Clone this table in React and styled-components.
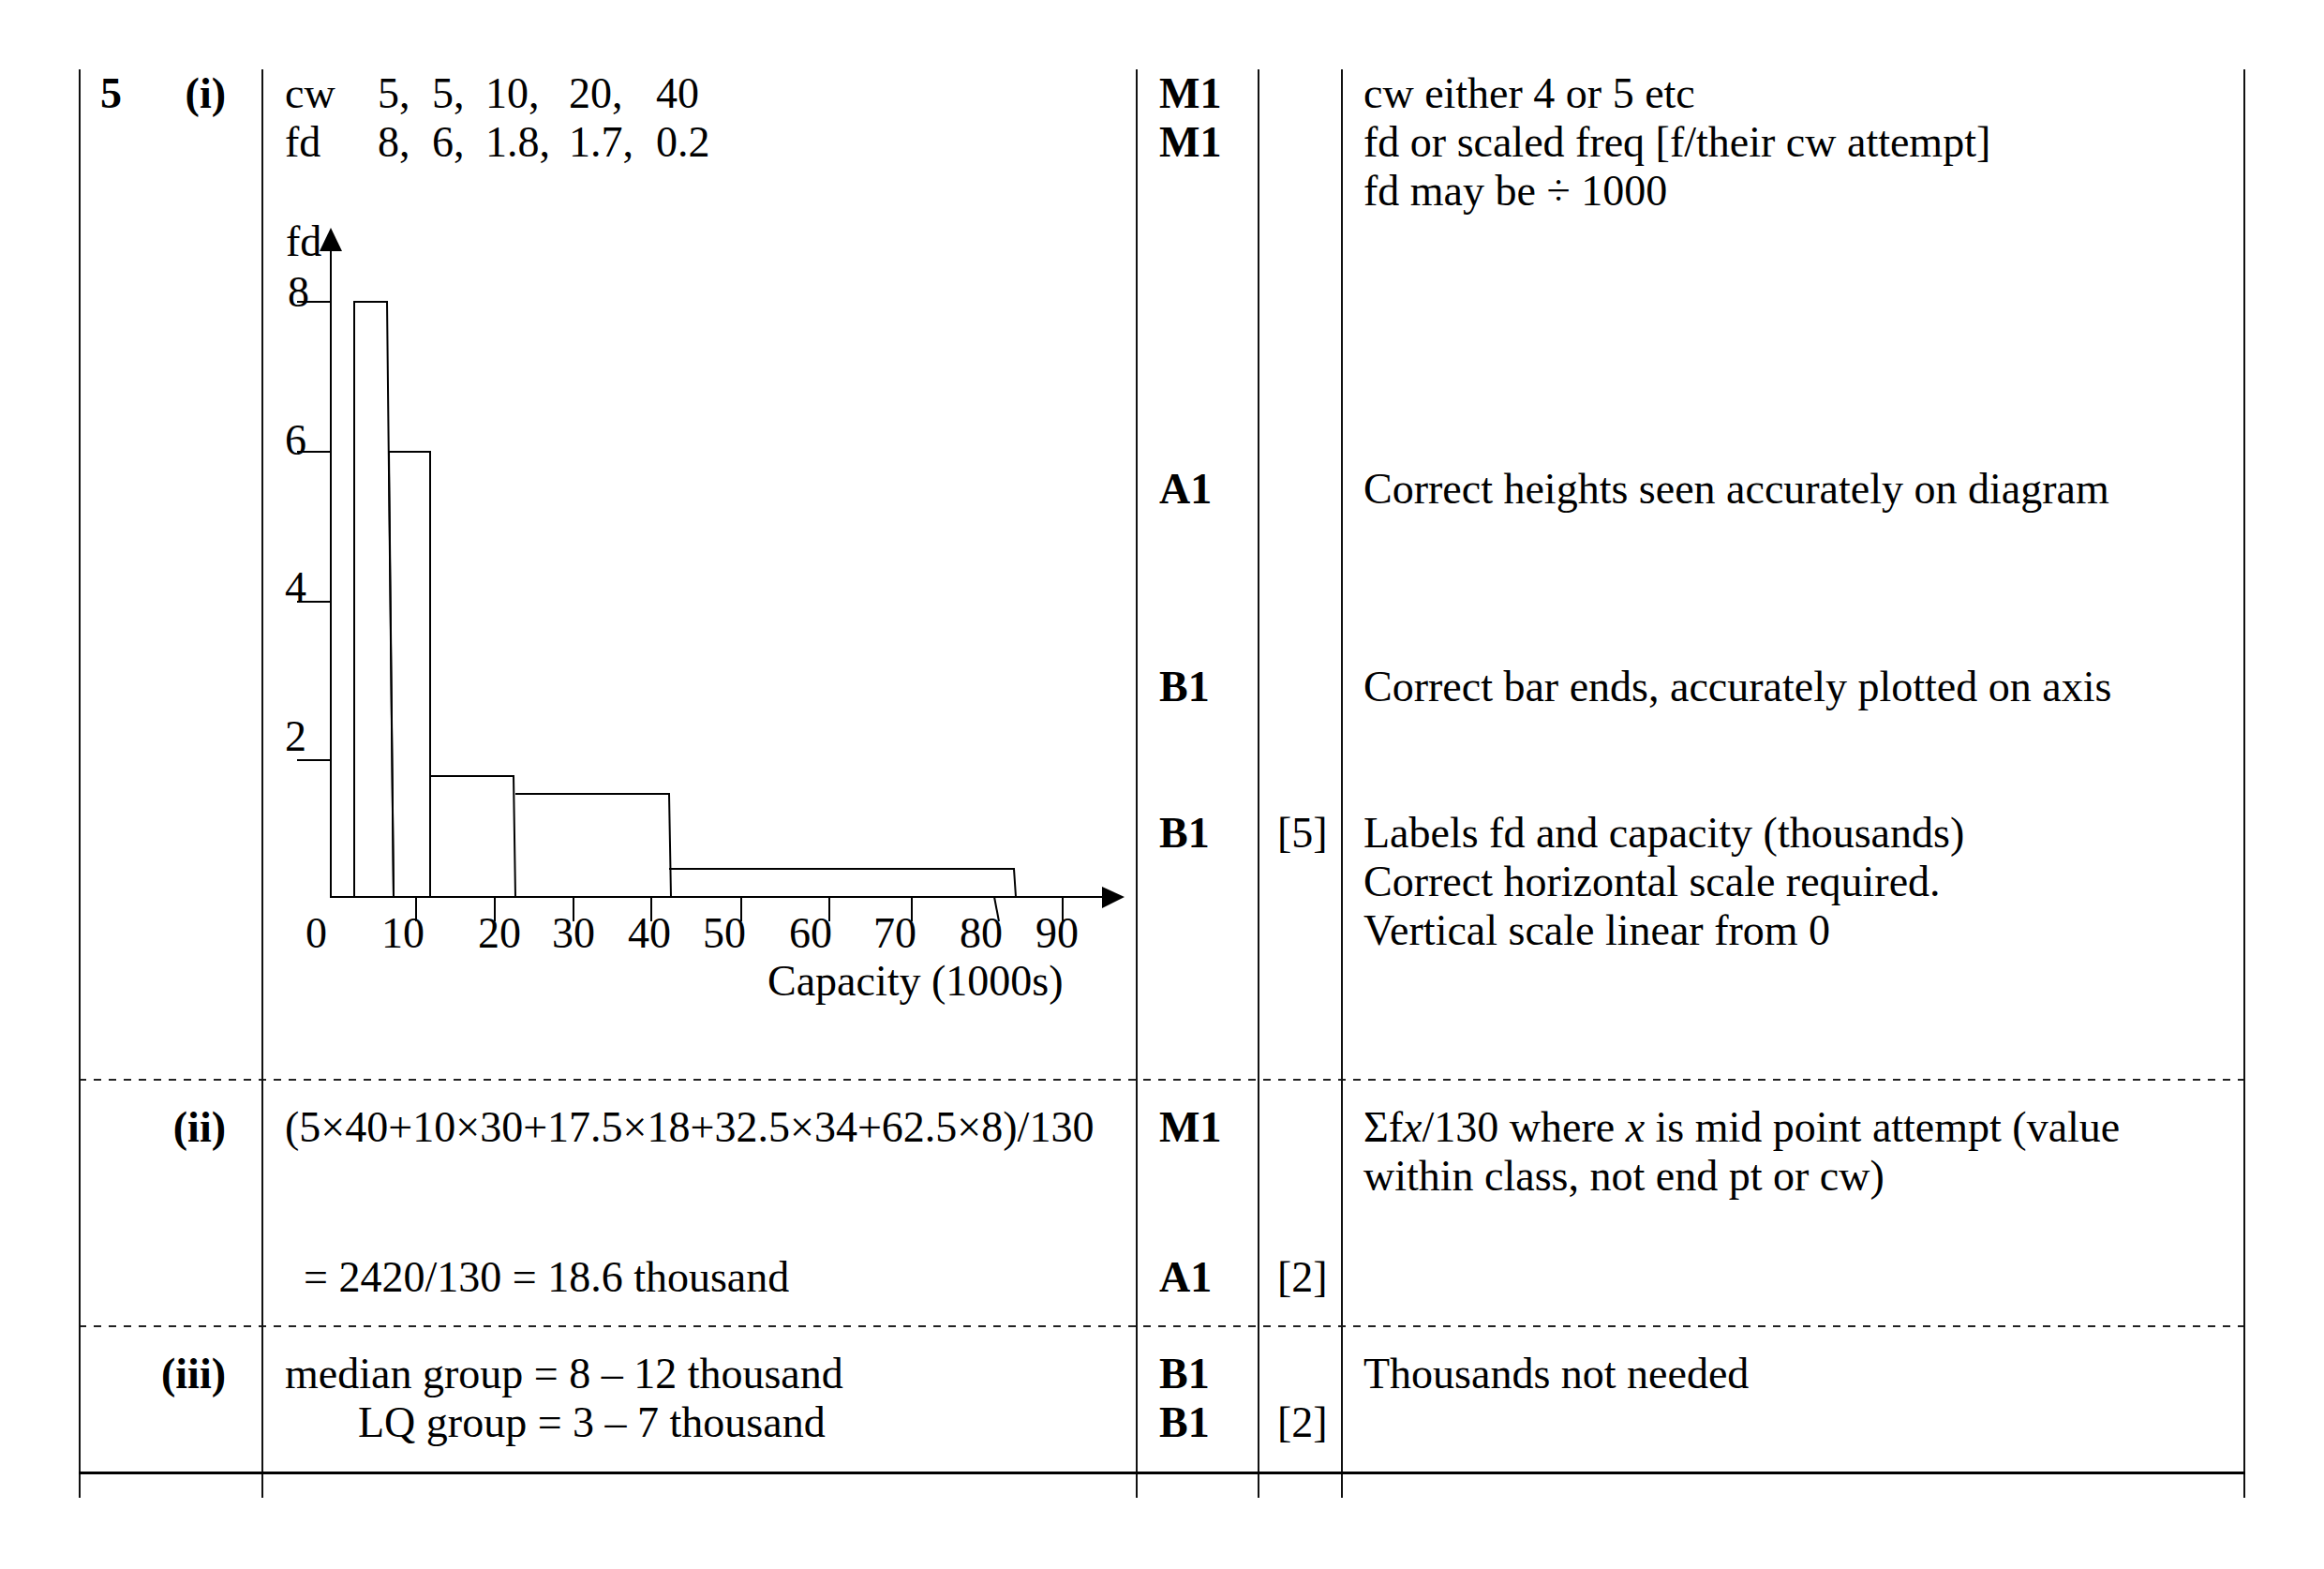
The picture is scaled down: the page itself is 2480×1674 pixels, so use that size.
import React from 'react';
import styled, { createGlobalStyle } from 'styled-components';

const GlobalStyle = createGlobalStyle`
  *, *::before, *::after { box-sizing: border-box; }
  html, body { margin: 0; background: #fff; }
  body {
    font-family: "Liberation Serif", "Times New Roman", serif;
    color: #000;
  }
`;

const Page = styled.div`
  padding: 74px 0 0 84px;
  font-size: 46px;
  line-height: 52px;
`;

const Table = styled.div`
  display: flex;
  flex-direction: column;
  width: 2312px;
`;

// column widths incl. the left rule of each cell
const Row = styled.div`
  display: grid;
  grid-template-columns: 195px 933px 130px 89px 965px;
  height: ${p => p.$h}px;
  ${p => p.$dashed && `
    background: repeating-linear-gradient(90deg, #222 0 8px, transparent 8px 16px) top left / 100% 2px no-repeat;
  `}
`;

const TailRow = styled(Row)`
  border-top: 3px solid #000;
`;

const Cell = styled.div`
  border-left: 2px solid #111;
  padding-left: ${p => p.$pl || 0}px;
  ${p => p.$last && 'border-right: 2px solid #111;'}
  min-width: 0;
`;

const PartCell = styled(Cell)`
  display: flex;
  align-items: flex-start;
  padding: ${p => p.$gap || 0}px 38px 0 21px;
  font-weight: 700;
  white-space: nowrap;
`;

const PartLabel = styled.span`
  margin-left: auto;
`;

const Line = styled.div`
  margin-top: ${p => p.$gap || 0}px;
  padding-left: ${p => p.$indent || 0}px;
  white-space: nowrap;
`;

const Mark = styled(Line)`
  font-weight: 700;
`;

const Series = styled.div`
  display: grid;
  grid-template-columns: 99px 58px 57px 89px 93px auto;
  white-space: nowrap;
`;

const Chart = styled.svg`
  display: block;
  width: 900px;
  height: 900px;
  overflow: visible;
  font-family: "Liberation Serif", "Times New Roman", serif;
  font-size: 46px;
  fill: #000;

  path, line {
    stroke: #000;
    stroke-width: 2;
    fill: none;
  }
`;

const yTicks = [
  { label: '8', y: 144, lx: 3, ly: 149 },
  { label: '6', y: 304, lx: 0, ly: 307 },
  { label: '4', y: 464, lx: 0, ly: 464 },
  { label: '2', y: 633, lx: 0, ly: 623 },
];

const xTicks = [140, 224, 308, 391, 487, 581, 669, 757, 830];

const xLabels = [
  ['0', 22], ['10', 103], ['20', 206], ['30', 285], ['40', 366],
  ['50', 446], ['60', 538], ['70', 628], ['80', 720], ['90', 801],
];

// hand drawn bar outlines, kept as plotted in the scheme
const bars = [
  'M74 779 L74 144 L109 144 L116 779',
  'M111 304 L116 779 M111 304 L155 304 L155 779',
  'M155 650 L244 650 L246 779',
  'M246 669 L410 669 L412 779',
  'M410 749 L778 749 L780 779',
];

const Histogram = () => (
  <Chart viewBox="0 0 900 900">
    <text x="1" y="95">fd</text>
    <line x1="49" y1="780" x2="49" y2="86" />
    <polygon points="49,65 37,90 61,90" />
    <line x1="48" y1="779" x2="876" y2="779" />
    <polygon points="896,779 872,768 872,791" />

    {yTicks.map(t => (
      <g key={t.label}>
        <text x={t.lx} y={t.ly}>{t.label}</text>
        <line x1="13" y1={t.y} x2="49" y2={t.y} />
      </g>
    ))}

    {xTicks.map((x, i) => (
      <line key={x} x1={x} y1="779" x2={i === 7 ? x + 5 : x} y2="805" />
    ))}
    {xLabels.map(([label, x]) => (
      <text key={label} x={x} y="833">{label}</text>
    ))}
    <text x="515" y="884">Capacity (1000s)</text>

    {bars.map(d => <path key={d} d={d} />)}
  </Chart>
);

const App = () => (
  <>
    <GlobalStyle />
    <Page>
      <Table>
        <Row $h={1077}>
          <PartCell>
            <span>5</span>
            <PartLabel>(i)</PartLabel>
          </PartCell>
          <Cell $pl={23}>
            <Series>
              <span>cw</span><span>5,</span><span>5,</span><span>10,</span><span>20,</span><span>40</span>
            </Series>
            <Series>
              <span>fd</span><span>8,</span><span>6,</span><span>1.8,</span><span>1.7,</span><span>0.2</span>
            </Series>
            <Histogram />
          </Cell>
          <Cell $pl={23}>
            <Mark>M1</Mark>
            <Mark>M1</Mark>
            <Mark $gap={318}>A1</Mark>
            <Mark $gap={159}>B1</Mark>
            <Mark $gap={104}>B1</Mark>
          </Cell>
          <Cell $pl={19}>
            <Line $gap={789}>[5]</Line>
          </Cell>
          <Cell $pl={22} $last>
            <Line>cw either 4 or 5 etc</Line>
            <Line>fd or scaled freq [f/their cw attempt]</Line>
            <Line>fd may be ÷ 1000</Line>
            <Line $gap={266}>Correct heights seen accurately on diagram</Line>
            <Line $gap={159}>Correct bar ends, accurately plotted on axis</Line>
            <Line $gap={104}>Labels fd and capacity (thousands)</Line>
            <Line>Correct horizontal scale required.</Line>
            <Line>Vertical scale linear from 0</Line>
          </Cell>
        </Row>

        <Row $h={263} $dashed>
          <PartCell $gap={26}>
            <PartLabel>(ii)</PartLabel>
          </PartCell>
          <Cell $pl={23}>
            <Line $gap={26}>(5×40+10×30+17.5×18+32.5×34+62.5×8)/130</Line>
            <Line $gap={108} $indent={20}>= 2420/130 = 18.6 thousand</Line>
          </Cell>
          <Cell $pl={23}>
            <Mark $gap={26}>M1</Mark>
            <Mark $gap={108}>A1</Mark>
          </Cell>
          <Cell $pl={19}>
            <Line $gap={186}>[2]</Line>
          </Cell>
          <Cell $pl={22} $last>
            <Line $gap={26}>Σf<i>x</i>/130 where <i>x</i> is mid point attempt (value</Line>
            <Line>within class, not end pt or cw)</Line>
          </Cell>
        </Row>

        <Row $h={156} $dashed>
          <PartCell $gap={26}>
            <PartLabel>(iii)</PartLabel>
          </PartCell>
          <Cell $pl={23}>
            <Line $gap={26}>median group = 8 – 12 thousand</Line>
            <Line $indent={78}>LQ group = 3 – 7 thousand</Line>
          </Cell>
          <Cell $pl={23}>
            <Mark $gap={26}>B1</Mark>
            <Mark>B1</Mark>
          </Cell>
          <Cell $pl={19}>
            <Line $gap={78}>[2]</Line>
          </Cell>
          <Cell $pl={22} $last>
            <Line $gap={26}>Thousands not needed</Line>
          </Cell>
        </Row>

        <TailRow $h={28}>
          <Cell />
          <Cell />
          <Cell />
          <Cell />
          <Cell $last />
        </TailRow>
      </Table>
    </Page>
  </>
);

export default App;
